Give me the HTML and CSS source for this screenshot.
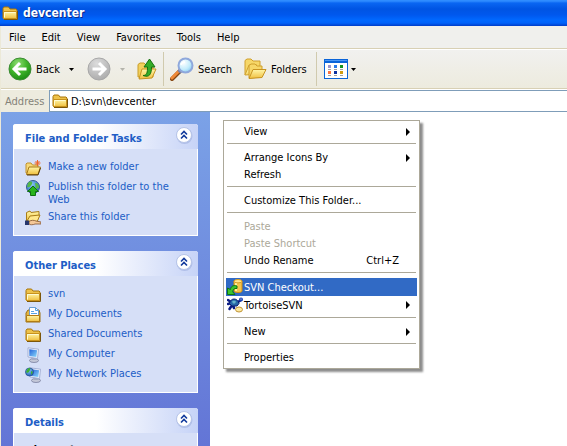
FILE: index.html
```html
<!DOCTYPE html>
<html lang="en">
<head>
<meta charset="utf-8">
<title>devcenter</title>
<link rel="stylesheet" href="styles.css">
</head>
<body>
<svg class="defs" aria-hidden="true">
  <defs>
    <linearGradient id="gold" x1="0" y1="0" x2="0" y2="1"><stop offset="0" stop-color="#fff6a8"/><stop offset="1" stop-color="#f0c040"/></linearGradient>
    <radialGradient id="green" cx=".4" cy=".25" r=".8"><stop offset="0" stop-color="#8fdc74"/><stop offset=".5" stop-color="#42b52c"/><stop offset="1" stop-color="#178a12"/></radialGradient>
    <radialGradient id="grey" cx=".4" cy=".25" r=".8"><stop offset="0" stop-color="#dcdcdc"/><stop offset="1" stop-color="#aaa"/></radialGradient>
    <radialGradient id="lens" cx=".35" cy=".3" r=".8"><stop offset="0" stop-color="#fff"/><stop offset=".6" stop-color="#c3ecfb"/><stop offset="1" stop-color="#7fc6f2"/></radialGradient>
    <linearGradient id="screen" x1="0" y1="0" x2="1" y2="1"><stop offset="0" stop-color="#2460d8"/><stop offset="1" stop-color="#8cdcfc"/></linearGradient>
    <radialGradient id="globe" cx=".4" cy=".3" r=".8"><stop offset="0" stop-color="#8cc8f4"/><stop offset="1" stop-color="#1552b4"/></radialGradient>
  </defs>
  <symbol id="folder" viewBox="0 0 16 16">
    <path d="M1 13V3.500L2 2h4.500l1.500 2h6l1 1v9H2z" fill="#eec24a" stroke="#a87408"/>
    <path d="M1.500 13.500v-7h13v7z" fill="url(#gold)" stroke="#c8921c"/>
    <path d="M2.500 12.500v-5h11" fill="none" stroke="#fffbd0"/>
    <path d="M2 14.500h13.500V6" fill="none" stroke="#7c560a"/>
  </symbol>
  <symbol id="openfolder" viewBox="0 0 16 16">
    <path d="M1 13V4l1-1h4l1.500 2H13v8z" fill="#f6d878" stroke="#c0902c"/>
    <path d="M1.500 14.500L4 7h11.500L13 14.500z" fill="url(#gold)" stroke="#a87818"/>
    <path d="M2 15h11l2.500-7" fill="none" stroke="#5c400c"/>
  </symbol>
  <symbol id="monitor" viewBox="0 0 16 16">
    <ellipse cx="9" cy="13.500" rx="4.500" ry="2" fill="#c4c8d8" stroke="#7880a0" stroke-width=".8"/>
    <path d="M7 10h4v3H7z" fill="#a4acc4"/>
    <path d="M3 .8l10.500 1.400-1 9.300L3 10z" fill="#eef2fc" stroke="#98a4cc" stroke-width=".8"/>
    <path d="M4.300 2.200l7.800 1-.8 6.900-7-1.200z" fill="url(#screen)"/>
  </symbol>
  <symbol id="chevrons" viewBox="0 0 18 18">
    <circle cx="9.500" cy="10" r="8" fill="#9caede" opacity=".6"/>
    <circle cx="9" cy="9" r="7.500" fill="#fff" stroke="#b6c4e8"/>
    <path d="M6 8.500l3-3 3 3M6 12.500l3-3 3 3" fill="none" stroke="#123a9c" stroke-width="1.600"/>
  </symbol>
</svg>

<div class="window">
  <header class="titlebar">
    <svg class="icon"><use href="#folder"/></svg>
    <h1>devcenter</h1>
  </header>

  <nav class="menubar">
    <button>File</button><button>Edit</button><button>View</button><button>Favorites</button><button>Tools</button><button>Help</button>
  </nav>

  <div class="toolbar">
    <button class="tool">
      <svg class="big" viewBox="0 0 24 24"><circle cx="12" cy="12" r="11" fill="url(#green)" stroke="#3c8c34"/><path d="M12 6l-6 6 6 6M6.500 12H18.500" fill="none" stroke="#fff" stroke-width="3"/></svg>
      <span>Back</span>
    </button>
    <button class="drop" aria-label="Back history"><svg viewBox="0 0 5 3"><path d="M0 0h5L2.500 3z"/></svg></button>
    <button class="tool forward" aria-label="Forward" disabled>
      <svg class="big" viewBox="0 0 24 24"><circle cx="12" cy="12" r="11" fill="url(#grey)" stroke="#a8a8a8"/><path d="M12 6l6 6-6 6M17.500 12H5.500" fill="none" stroke="#fff" stroke-width="3"/></svg>
    </button>
    <button class="drop" aria-label="Forward history" disabled><svg viewBox="0 0 5 3"><path d="M0 0h5L2.500 3z"/></svg></button>
    <button class="tool up" aria-label="Up">
      <svg class="mid" viewBox="0 0 20 24">
        <path d="M1 20V7.500L3 6h4l2 2h7v12z" fill="#f2d05c" stroke="#c89c28"/>
        <path d="M2 22l3-10h14l-4 9z" fill="url(#gold)" stroke="#c89420"/>
        <path d="M6 18.500c4 0 4.500-3 4.500-8.500H7l5.500-8 5.500 8h-3.500c0 7-2 11-8.500 8.500z" fill="#35ad27" stroke="#167010"/>
      </svg>
    </button>
    <span class="divider"></span>
    <button class="tool search">
      <svg class="big" viewBox="0 0 24 24"><path d="M10 14l-8 8" stroke="#85450f" stroke-width="4" stroke-linecap="round"/><path d="M9 14l-7 7" stroke="#f08a38" stroke-width="3" stroke-linecap="round"/><path d="M8 13l3 3" stroke="#7b83a8" stroke-width="2"/><circle cx="15.500" cy="8.500" r="7" fill="url(#lens)" stroke="#8fa8dc" stroke-width="2"/><path d="M11 8c.5-2 2-3 4-3" fill="none" stroke="#fff" stroke-width="1.500"/></svg>
      <span>Search</span>
    </button>
    <button class="tool folders">
      <svg class="mid-wide" viewBox="0 0 23 24">
        <path d="M1 18V3.500L3 2h4l2 2h7v13z" fill="#f6d768" stroke="#d0a02c"/>
        <path d="M1 18L5 8h8" fill="#fbe88c" stroke="#d0a02c"/>
        <path d="M5 21V8.500L7 7h4l2 2h5v11z" fill="#f6d768" stroke="#d0a02c"/>
        <path d="M5 21.500l4-9h13l-4 8z" fill="url(#gold)" stroke="#c89420"/>
      </svg>
      <span>Folders</span>
    </button>
    <span class="divider wide"></span>
    <button class="tool views" aria-label="Views">
      <svg class="big" viewBox="0 0 24 20">
        <path d="M0 0h24v20H0z" fill="#0a64d8"/><path d="M1 4h22v15H1z" fill="#fff"/><path d="M1 1h22v1H1z" fill="#4c98f4"/>
        <path d="M4 6h3v3H4z" fill="#9c94cc"/><path d="M10 6h3v3h-3z" fill="#2a7ae8"/><path d="M16 6h3v3h-3z" fill="#14941c"/>
        <path d="M4 12h3v3H4z" fill="#fa7440"/><path d="M10 12h3v3h-3z" fill="#0b30a0"/><path d="M16 12h3v3h-3z" fill="#d09c10"/>
        <path d="M4 10.500h3m3 0h3m3 0h3M4 16.500h3m3 0h3m3 0h3" stroke="#a0a0a0"/>
      </svg>
    </button>
    <button class="drop last" aria-label="Choose view"><svg viewBox="0 0 5 3"><path d="M0 0h5L2.500 3z"/></svg></button>
  </div>

  <div class="addressbar">
    <label for="address">Address</label>
    <div class="field">
      <svg class="icon"><use href="#folder"/></svg>
      <input id="address" type="text" value="D:\svn\devcenter">
    </div>
  </div>

  <div class="content">
    <aside class="sidebar">
      <section class="panel">
        <div class="panel-head"><h2>File and Folder Tasks</h2><button aria-label="Collapse File and Folder Tasks"><svg><use href="#chevrons"/></svg></button></div>
        <ul>
          <li><svg class="icon" viewBox="0 0 16 16"><use href="#openfolder"/><path d="M12.500 0v6M9.500 3h6M10.500 1l4 4M14.500 1l-4 4" stroke="#f06428"/></svg><a href="#">Make a new folder</a></li>
          <li><svg class="icon" viewBox="0 0 16 16"><circle cx="8" cy="7" r="6.500" fill="url(#globe)" stroke="#345c94"/><path d="M3 3c3-3 5-1 4 1S4 8 2 7zM10 3c3 0 4 2 4 5l-3 1z" fill="#54b848"/><path d="M8 6l5.500 5.500h-3v4h-5v-4h-3z" fill="#28b41c" stroke="#107010"/></svg><a href="#">Publish this folder to the Web</a></li>
          <li><svg class="icon" viewBox="0 0 16 16"><path d="M1.500 11V2.500L5 1l1 1.500 8-1V6l-2 5z" fill="url(#gold)" stroke="#a87c18"/><path d="M2 11l3-5 10-1-3 7z" fill="#ffe88c" stroke="#a87c18"/><path d="M4 11.500c2-1.500 5-1.500 7-.5l5 1v2h-6c-2 1-5 1-6 0z" fill="#f4c898" stroke="#805030" stroke-width=".8"/><path d="M0 10.500h4V15H0z" fill="#26366c"/></svg><a href="#">Share this folder</a></li>
        </ul>
      </section>

      <section class="panel">
        <div class="panel-head"><h2>Other Places</h2><button aria-label="Collapse Other Places"><svg><use href="#chevrons"/></svg></button></div>
        <ul>
          <li><svg class="icon"><use href="#folder"/></svg><a href="#">svn</a></li>
          <li><svg class="icon" viewBox="0 0 16 16"><path d="M1 6l2-3h11l1 3v9H1z" fill="#e4b440" stroke="#9c7010"/><path d="M4.500 10V.5h6l3 3V10z" fill="#fff" stroke="#6c9cd0"/><path d="M10.500.5v3h3M6 4.500h3M6 6.500h6" fill="none" stroke="#58a4e4"/><path d="M1.500 14.500V8.500h13v6z" fill="url(#gold)" stroke="#b07c14"/></svg><a href="#">My Documents</a></li>
          <li><svg class="icon"><use href="#folder"/></svg><a href="#">Shared Documents</a></li>
          <li><svg class="icon"><use href="#monitor"/></svg><a href="#">My Computer</a></li>
          <li><svg class="icon" viewBox="0 0 16 16"><use href="#monitor" x="2" y="0" width="16" height="16"/><circle cx="4.500" cy="5" r="4" fill="url(#globe)" stroke="#245090" stroke-width=".8"/><path d="M2 3c2-3 4-2 3 0S3 7 1 5zM6 4l2 1-2 3z" fill="#3cb034"/></svg><a href="#">My Network Places</a></li>
        </ul>
      </section>

      <section class="panel">
        <div class="panel-head"><h2>Details</h2><button aria-label="Collapse Details"><svg><use href="#chevrons"/></svg></button></div>
        <p>devcenter</p>
      </section>
    </aside>

    <main class="files">
      <div class="context" role="menu">
        <button role="menuitem"><span>View</span><i class="more"></i></button>
        <hr>
        <button role="menuitem"><span>Arrange Icons By</span><i class="more"></i></button>
        <button role="menuitem"><span>Refresh</span></button>
        <hr>
        <button role="menuitem"><span>Customize This Folder...</span></button>
        <hr>
        <button role="menuitem" disabled><span>Paste</span></button>
        <button role="menuitem" disabled><span>Paste Shortcut</span></button>
        <button role="menuitem"><span>Undo Rename</span><kbd>Ctrl+Z</kbd></button>
        <hr>
        <button role="menuitem" class="with-icon selected">
          <svg class="icon" viewBox="0 0 16 16"><path d="M7 2v10c0 2 8 2 8 0V2z" fill="#f4c44c" stroke="#d08c10"/><path d="M9 3v9" stroke="#fff0a0" stroke-width="2"/><ellipse cx="11" cy="2.200" rx="4" ry="1.700" fill="#ffe48c" stroke="#d89c20"/><path d="M10 7C6 5.500 3.500 8 3.500 10.500L.5 9v6.500H8L5.800 13c0-2 1-4 4.200-3.500z" fill="#3cc42c" stroke="#0c7410"/></svg>
          <span>SVN Checkout...</span></button>
        <button role="menuitem" class="with-icon">
          <svg class="icon" viewBox="0 0 16 16"><path d="M1 3l3 2M1 7l3-1M2.500 12l2-3M7 11l-1-3M11 5l3-2" stroke="#0c1c84" stroke-width="2.500" stroke-linecap="round"/><path d="M2.500 6.500c1-6 8-6 9.500 0l-2 2.500H5z" fill="#2868a8" stroke="#0a1c70"/><path d="M5 4.500l2-1 2 1-1 2H6z" fill="#68b4cc"/><circle cx="14" cy="2.500" r="2" fill="#1840b8"/><circle cx="14" cy="2" r=".6" fill="#fff"/><ellipse cx="12" cy="12.500" rx="3.500" ry="2.500" fill="#fce8a0" stroke="#c09438"/></svg>
          <span>TortoiseSVN</span><i class="more"></i></button>
        <hr>
        <button role="menuitem"><span>New</span><i class="more"></i></button>
        <hr>
        <button role="menuitem"><span>Properties</span></button>
      </div>
    </main>
  </div>
</div>
</body>
</html>
```
FILE: styles.css
```css
* { box-sizing: border-box; }

body {
  margin: 0;
  overflow: hidden;
  font: 11px/13px "DejaVu Sans Condensed", "DejaVu Sans", sans-serif;
  color: #000;
}

button {
  margin: 0;
  padding: 0;
  border: 0;
  background: none;
  font: inherit;
  color: inherit;
}

svg { display: block; flex: none; }
.defs { position: absolute; width: 0; height: 0; }
.icon { width: 16px; height: 16px; }

.window {
  display: flex;
  flex-direction: column;
  height: 100vh;
  border-left: 1px solid #ece9d8;
}

.titlebar {
  display: flex;
  align-items: center;
  gap: 5px;
  height: 26px;
  margin-left: -1px;
  padding: 0 2px;
  background: linear-gradient(#2f8cff 0, #2f8cff 1px, #0a66f2 3px, #0054e3 9px, #0058ee 15px, #0068ff 20px, #0062fa 23px, #003cc8 26px);
}

.titlebar h1 {
  margin: 0;
  font-size: 12px;
  line-height: 16px;
  color: #fff;
  text-shadow: 1px 1px #0a2a8c;
}

.menubar {
  display: flex;
  gap: 16px;
  height: 23px;
  padding: 0 8px;
  background: #f0f0ed;
  border-bottom: 1px solid #d8d0b4;
}

.toolbar {
  display: flex;
  align-items: center;
  height: 40px;
  padding: 0 7px;
  background: linear-gradient(#f1f1ef, #edebde);
  border-top: 1px solid #fff;
  border-bottom: 1px solid #d8d0b4;
}

.tool { display: flex; align-items: center; gap: 4px; }
.big { width: 24px; height: 24px; }
.mid { width: 20px; height: 24px; }
.mid-wide { width: 23px; height: 24px; }
.views .big { height: 20px; }
.drop { width: 5px; margin-left: 9px; }
.drop svg { width: 5px; height: 3px; }
.drop:disabled svg { fill: #b4b4ac; }
.forward { margin-left: 13px; }
.up { margin-left: 12px; }
.folders { margin-left: 12px; }
.drop.last { margin-left: 3px; }

.divider {
  width: 1px;
  height: 34px;
  margin: 0 6px;
  background: #d0caae;
}

.divider.wide { margin: 0 7px 0 9px; }

.addressbar {
  display: flex;
  height: 23px;
  border-top: 1px solid #fff;
  background: #edebde;
}

.addressbar label {
  width: 48px;
  padding: 5px 0 0 4px;
  color: #848278;
}

.field {
  display: flex;
  flex: 1;
  align-items: center;
  gap: 3px;
  padding-left: 2px;
  background: #fff;
  border: 1px solid #7f9db9;
  border-right: 0;
}

.field input {
  flex: 1;
  min-width: 0;
  padding: 0;
  border: 0;
  outline: 0;
  background: none;
  font: inherit;
  color: inherit;
}

.content { display: flex; flex: 1; min-height: 0; }

.sidebar {
  display: flex;
  flex: none;
  flex-direction: column;
  gap: 15px;
  width: 209px;
  padding: 12px;
  overflow: hidden;
  background: linear-gradient(#7ba2e7, #6375d6);
}

.panel {
  flex: none;
  background: #d6dff7;
  border: 1px solid #fff;
  border-top: 0;
  border-radius: 3px 3px 0 0;
}

.panel-head {
  display: flex;
  align-items: center;
  justify-content: space-between;
  height: 25px;
  margin: 0 -1px;
  padding: 0 5px 3px 12px;
  background: linear-gradient(90deg, #fff 45%, #c6d3f7);
  border-radius: 3px 3px 0 0;
}

.panel h2 {
  margin: 0;
  padding-top: 6px;
  font-size: 11px;
  line-height: 13px;
  color: #215dc6;
}

.panel-head svg { width: 18px; height: 18px; }

.panel ul {
  margin: 0;
  padding: 8px 11px;
  list-style: none;
}

.panel li {
  display: flex;
  gap: 7px;
  min-height: 20px;
  padding: 3px 0 1px;
}

.panel a { color: #215dc6; text-decoration: none; }
.panel p { margin: 0; padding: 10px 16px; font-weight: bold; }

.files { position: relative; flex: 1; background: #fff; }

.context {
  position: absolute;
  top: 8px;
  left: 13px;
  width: 197px;
  padding: 2px;
  background: #fff;
  border: 1px solid #aca899;
  box-shadow: 3px 3px 2px rgba(0, 0, 0, .45);
}

.context button {
  display: flex;
  align-items: center;
  width: 100%;
  height: 17px;
  padding: 0 7px 0 18px;
  text-align: left;
}

.context span { flex: 1; white-space: nowrap; }
.context button:disabled { color: #aca899; }
.context .with-icon { gap: 1px; height: 18px; padding-left: 1px; }
.context .selected { background: #316ac5; color: #fff; }
.context kbd { padding-right: 11px; font: inherit; }

.context hr {
  height: 1px;
  margin: 3px 1px 5px;
  border: 0;
  background: #aca899;
}

.more {
  border: 4px solid transparent;
  border-right: 0;
  border-left-color: #000;
}
```
